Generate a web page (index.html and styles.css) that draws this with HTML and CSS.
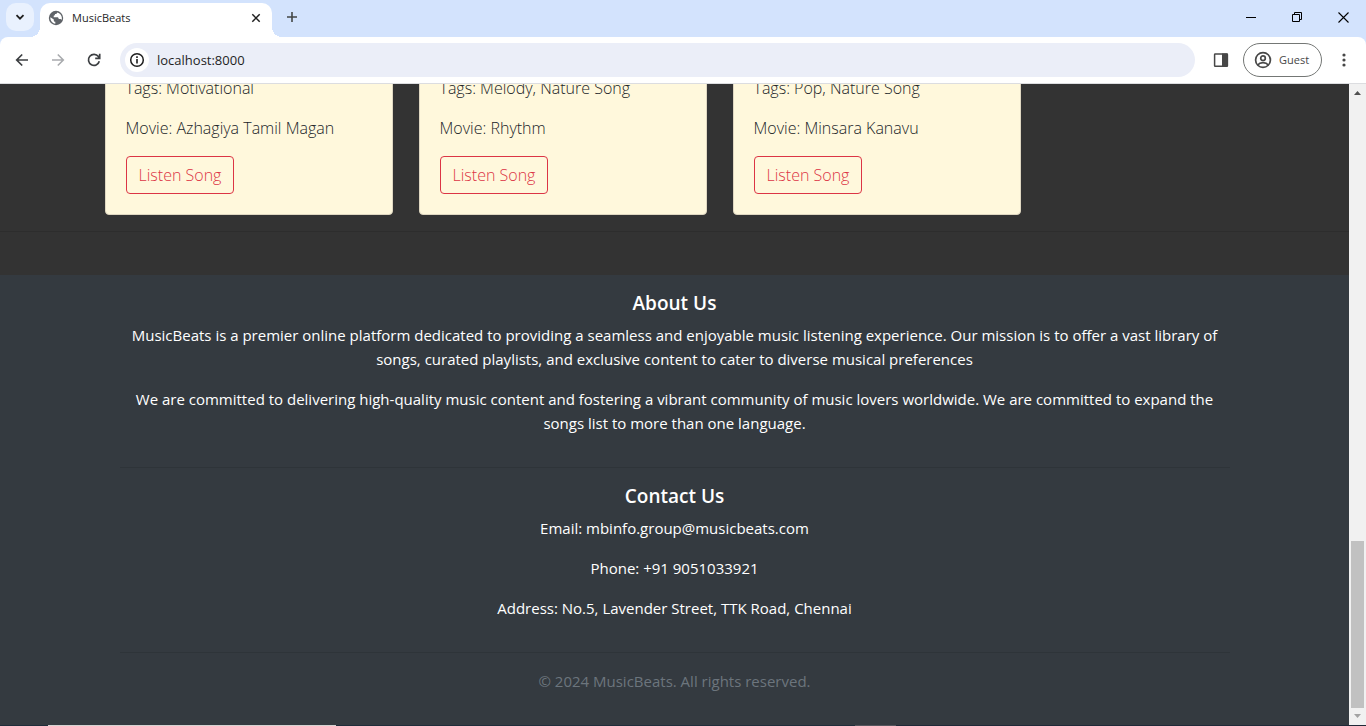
FILE: index.html
```html
<!DOCTYPE html>
<html lang="en">
<head>
<meta charset="utf-8">
<title>MusicBeats</title>
<link rel="stylesheet" href="styles.css">
</head>
<body>
<div class="window">
  <div class="tabstrip">
    <button class="tab-search" type="button" aria-label="Search tabs">
      <svg width="10" height="10" viewBox="0 0 10 10"><path d="M1.5 3.2 5 6.7 8.5 3.2" fill="none" stroke="#1f1f1f" stroke-width="1.8"/></svg>
    </button>
    <div class="tab">
      <svg width="16" height="16" viewBox="0 0 16 16"><circle cx="8" cy="8" r="7.2" fill="#5f6368"/><path d="M9.200 2.400c-.2 1-.9 1.500-2.200 1.600 0 1-.4 1.500-1.300 1.700v1.500h3.400c1.100 0 1.600.6 1.600 1.700h1.200c.9 0 1.400.4 1.700 1 .2-.6.3-1.200.3-1.900 0-2.600-1.900-5-4.700-5.600ZM2.400 7.200C2 10.300 4.200 13.300 7.300 13.700v-1.900c-.9 0-1.500-.5-1.500-1.400v-.8Z" fill="#fff"/></svg>
      <span class="tab-title">MusicBeats</span>
      <button class="icon-button tab-close" type="button" aria-label="Close tab">
        <svg width="10" height="10" viewBox="0 0 10 10"><path d="m1.300 1.300 7.400 7.400m0-7.400-7.400 7.400" stroke="#1f1f1f" stroke-width="1.500"/></svg>
      </button>
    </div>
    <button class="icon-button new-tab" type="button" aria-label="New tab">
      <svg width="12" height="12" viewBox="0 0 12 12"><path d="M6 1v10M1 6h10" stroke="#444746" stroke-width="1.600"/></svg>
    </button>
    <div class="window-controls">
      <button class="icon-button" type="button" aria-label="Minimize"><svg width="11" height="11" viewBox="0 0 11 11"><path d="M0 5.500h10" stroke="#000"/></svg></button>
      <button class="icon-button" type="button" aria-label="Restore"><svg width="11" height="11" viewBox="0 0 11 11"><path d="M.5 2.500h7v7h-7zM2.500 2.500v-2h7v7h-2" fill="none" stroke="#000"/></svg></button>
      <button class="icon-button" type="button" aria-label="Close"><svg width="11" height="11" viewBox="0 0 11 11"><path d="m.5.5 10 10m0-10-10 10" stroke="#000" stroke-width="1.100"/></svg></button>
    </div>
  </div>

  <div class="toolbar">
    <button class="icon-button nav-button" type="button" aria-label="Back"><svg width="14" height="14" viewBox="0 0 14 14"><path d="M13 7H2M7.200 1.500 1.700 7l5.500 5.500" fill="none" stroke="#3c3f42" stroke-width="1.700"/></svg></button>
    <button class="icon-button nav-button" type="button" aria-label="Forward" disabled><svg width="14" height="14" viewBox="0 0 14 14"><path d="M1 7h11M6.800 1.500 12.300 7l-5.500 5.500" fill="none" stroke="#a9abae" stroke-width="1.600"/></svg></button>
    <button class="icon-button nav-button" type="button" aria-label="Reload"><svg width="14" height="14" viewBox="0 0 14 14"><path d="M12.300 8.300A5.500 5.500 0 1 1 11.400 3.600L12.800 5M12.700.8v4.500H8.200" fill="none" stroke="#3c3f42" stroke-width="1.700"/></svg></button>
    <div class="address-bar">
      <button class="site-info" type="button" aria-label="Site information"><svg width="16" height="16" viewBox="0 0 16 16"><circle cx="8" cy="8" r="6.300" fill="none" stroke="#1f1f1f" stroke-width="1.500"/><path d="M8 7v4.500M8 4.300v1.700" stroke="#1f1f1f" stroke-width="1.600"/></svg></button>
      <input class="address" type="text" value="localhost:8000" aria-label="Address">
    </div>
    <button class="icon-button side-panel" type="button" aria-label="Side panel"><svg width="16" height="16" viewBox="0 0 16 16"><rect x="1.600" y="1.900" width="12.800" height="12.400" rx=".6" fill="none" stroke="#474747" stroke-width="1.500"/><path d="M9 1.500h5.500v13H9z" fill="#474747"/></svg></button>
    <button class="profile" type="button">
      <svg width="18" height="18" viewBox="0 0 18 18" fill="none" stroke="#474747" stroke-width="1.700"><circle cx="9" cy="9" r="7.400"/><circle cx="9" cy="7.200" r="2.300"/><path d="M3.700 14c1.200-1.600 3.100-2.400 5.300-2.400s4.100.8 5.300 2.400"/></svg>
      <span>Guest</span>
    </button>
    <button class="icon-button menu" type="button" aria-label="Menu"><svg width="16" height="16" viewBox="0 0 16 16" fill="#474747"><circle cx="8" cy="3" r="1.600"/><circle cx="8" cy="8" r="1.600"/><circle cx="8" cy="13" r="1.600"/></svg></button>
  </div>

  <div class="viewport">
    <div class="page">
      <main>
        <div class="container cards">
          <article class="card">
            <p>Tags: Motivational</p>
            <p>Movie: Azhagiya Tamil Magan</p>
            <button class="listen" type="button">Listen Song</button>
          </article>
          <article class="card">
            <p>Tags: Melody, Nature Song</p>
            <p>Movie: Rhythm</p>
            <button class="listen" type="button">Listen Song</button>
          </article>
          <article class="card">
            <p>Tags: Pop, Nature Song</p>
            <p>Movie: Minsara Kanavu</p>
            <button class="listen" type="button">Listen Song</button>
          </article>
        </div>
        <hr>
      </main>
      <footer class="footer">
        <div class="container footer-inner">
          <section>
            <h5>About Us</h5>
            <p>MusicBeats is a premier online platform dedicated to providing a seamless and enjoyable music listening experience. Our mission is to offer a vast library of songs, curated playlists, and exclusive content to cater to diverse musical preferences</p>
            <p>We are committed to delivering high-quality music content and fostering a vibrant community of music lovers worldwide. We are committed to expand the songs list to more than one language.</p>
          </section>
          <hr>
          <section>
            <h5>Contact Us</h5>
            <p>Email: mbinfo.group@musicbeats.com</p>
            <p>Phone: +91 9051033921</p>
            <p>Address: No.5, Lavender Street, TTK Road, Chennai</p>
          </section>
          <hr>
          <p class="copyright">© 2024 MusicBeats. All rights reserved.</p>
        </div>
      </footer>
    </div>
    <div class="scrollbar">
      <svg width="17" height="17" viewBox="0 0 17 17"><path d="M5 11h7L8.500 7z" fill="#505050"/></svg>
      <div class="track"><div class="thumb"></div></div>
      <svg width="17" height="17" viewBox="0 0 17 17"><path d="M5 6h7l-3.500 4z" fill="#a3a3a3"/></svg>
    </div>
  </div>
  <div class="taskbar"></div>
</div>
</body>
</html>
```
FILE: styles.css
```css
* { box-sizing: border-box; }

body {
  margin: 0;
  font-family: "Open Sans", "Noto Sans", sans-serif;
  font-size: 15px;
  line-height: 24px;
  color: #212529;
}

button, input { font: inherit; color: inherit; margin: 0; }
svg { display: block; flex: none; }

.window {
  height: 100vh;
  display: flex;
  flex-direction: column;
  overflow: hidden;
  background: #d3e3fd;
}

.icon-button {
  display: flex;
  align-items: center;
  justify-content: center;
  padding: 0;
  border: 0;
  background: transparent;
}

/* Tab strip */
.tabstrip {
  display: flex;
  align-items: center;
  height: 37px;
  flex: none;
  padding-left: 6px;
}

.tab-search {
  display: flex;
  align-items: center;
  justify-content: center;
  width: 28px;
  height: 28px;
  margin-bottom: 3px;
  padding: 0;
  border: 0;
  border-radius: 10px;
  background: #e9f1fe;
}

.tab {
  position: relative;
  display: flex;
  align-items: center;
  align-self: flex-end;
  gap: 8px;
  width: 232px;
  height: 34px;
  margin-left: 6px;
  padding: 0 10px 5px 8px;
  border-radius: 10px 10px 0 0;
  background: #fff;
}

.tab::before,
.tab::after {
  content: "";
  position: absolute;
  bottom: 0;
  width: 10px;
  height: 10px;
}

.tab::before {
  right: 100%;
  background: radial-gradient(circle at 0 0, transparent 10px, #fff 10px);
}

.tab::after {
  left: 100%;
  background: radial-gradient(circle at 100% 0, transparent 10px, #fff 10px);
}

.tab-title {
  flex: 1;
  font-size: 11px;
  color: #1f1f1f;
}

.tab-close { width: 12px; height: 12px; }

.new-tab {
  width: 28px;
  height: 28px;
  margin: 0 0 3px 6px;
}

.window-controls {
  display: flex;
  margin-left: auto;
}

.window-controls .icon-button {
  width: 46px;
  height: 34px;
  margin-bottom: 3px;
}

/* Toolbar */
.toolbar {
  display: flex;
  align-items: center;
  height: 47px;
  flex: none;
  padding: 0 8px 0 4px;
  border-bottom: 1px solid #dcdde0;
  border-radius: 8px 8px 0 0;
  background: #fff;
}

.nav-button { width: 36px; height: 34px; }

.address-bar {
  display: flex;
  align-items: center;
  flex: 1;
  gap: 8px;
  height: 34px;
  margin-left: 8px;
  padding: 0 5px;
  border-radius: 17px;
  background: #ebeef8;
}

.site-info {
  display: flex;
  align-items: center;
  justify-content: center;
  width: 24px;
  height: 24px;
  padding: 0;
  border: 0;
  border-radius: 50%;
  background: #fff;
}

.address {
  flex: 1;
  min-width: 0;
  padding: 0;
  border: 0;
  outline: 0;
  background: transparent;
  font-size: 13px;
  color: #1f1f1f;
}

.side-panel { width: 16px; margin: 0 14px 0 18px; }

.profile {
  display: flex;
  align-items: center;
  gap: 7px;
  width: 79px;
  height: 34px;
  padding: 0 0 0 10px;
  border: 1px solid #747775;
  border-radius: 17px;
  background: #fff;
  color: #474747;
  font-size: 11px;
}

.menu { width: 16px; margin: 0 6px 0 14px; }

/* Web page */
.viewport {
  display: flex;
  flex: 1;
  min-height: 0;
}

.page {
  display: flex;
  flex-direction: column;
  justify-content: flex-end;
  flex: 1;
  min-width: 0;
  overflow: hidden;
  background: #333;
}

.container {
  width: 100%;
  max-width: 1140px;
  margin: 0 auto;
}

main { padding-bottom: 27px; }

hr {
  height: 1px;
  margin: 16px 0;
  border: 0;
  background: rgba(0, 0, 0, 0.1);
}

p { margin: 0 0 16px; }

.cards {
  display: flex;
  gap: 26px;
}

.card {
  width: 288px;
  padding: 20px;
  border: 1px solid #dfd7c1;
  border-radius: 4px;
  background: #fff8dc;
  font-size: 16px;
  font-weight: 300;
}

.listen {
  display: block;
  height: 38px;
  padding: 0 12px;
  border: 1px solid #dc3545;
  border-radius: 4px;
  background: transparent;
  color: #dc3545;
}

.footer {
  flex: none;
  padding: 16px 0;
  background: #343a40;
  color: #fff;
  text-align: center;
}

.footer-inner { padding: 0 15px; }
.footer section { padding-bottom: 16px; }
.footer section p:last-child { margin-bottom: 0; }

h5 {
  margin: 0 0 8px;
  font-size: 19px;
  font-weight: 600;
  line-height: 24px;
}

.copyright { color: #6c757d; }

/* Scrollbar */
.scrollbar {
  display: flex;
  flex-direction: column;
  width: 17px;
  flex: none;
  background: #f1f1f1;
}

.track {
  display: flex;
  flex-direction: column;
  justify-content: flex-end;
  flex: 1;
  padding: 0 2px;
}

.thumb {
  height: 167px;
  background: #c1c1c1;
}

.taskbar {
  height: 1px;
  flex: none;
  background: linear-gradient(90deg, #1f2d3a 48px, #d6d3d2 48px 336px, #1f2d3a 336px 855px, #55565e 855px 896px, #1f2938 896px);
}
```
